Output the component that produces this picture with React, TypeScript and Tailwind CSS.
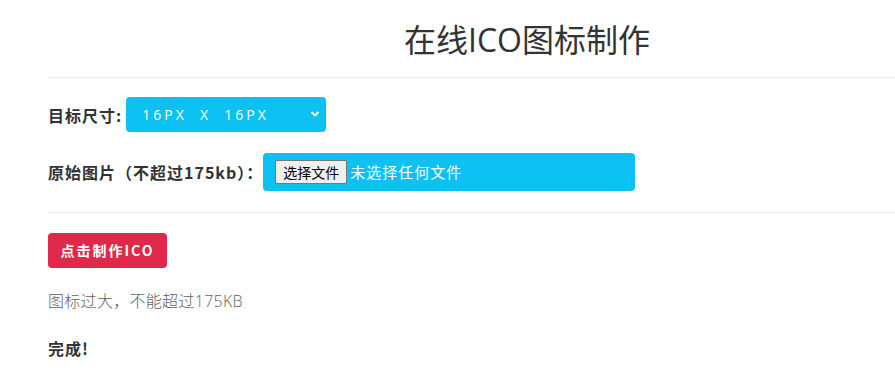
import React from 'react';

const font = { fontFamily: '"Open Sans", "Noto Sans CJK SC", sans-serif' };
const cjk = { fontFamily: '"Noto Sans CJK SC", "Open Sans", sans-serif' };

const App: React.FC = () => {
  return (
    <div className="w-full min-h-[371px] overflow-hidden bg-white text-[#333]" style={font}>
      <div className="ml-[48px] w-[958px]">
        {/* Title */}
        <div className="h-[78px] pt-[21px] border-b border-[#eeeeee]">
          <h1 className="text-center text-[32px] leading-[38px] font-normal text-[#333]">在线ICO图标制作</h1>
        </div>

        {/* Form */}
        <div className="pt-[19px] pb-[21px] border-b border-[#eeeeee]">
          <div className="flex items-center h-[35px]">
            <label className="text-[16px] font-bold tracking-[1px] mr-[4px]" style={cjk}>目标尺寸:</label>
            <div className="relative w-[200px] h-[35px] rounded-[4px] bg-[#0dc1f2] text-white flex items-center">
              <span className="pl-[16px] text-[14px] tracking-[3px]">16PX&nbsp; X&nbsp; 16PX</span>
              <svg className="absolute right-[6px] top-[13px]" width="10" height="8" viewBox="0 0 10 8" fill="none">
                <path d="M1.5 2 L5 5.5 L8.5 2" stroke="white" strokeWidth="1.8" />
              </svg>
            </div>
          </div>
          <div className="flex items-center h-[38px] mt-[21px]">
            <label className="text-[16px] font-bold tracking-[1px]" style={cjk}>原始图片（不超过175kb）：</label>
            <div className="w-[372px] h-[38px] rounded-[4px] bg-[#0dc1f2] flex items-center pl-[12px]">
              <button className="h-[24px] px-[7px] bg-[#efefef] border border-[#767676] rounded-[2px] text-[14px] leading-none text-black" style={cjk}>
                选择文件
              </button>
              <span className="ml-[3px] text-[15px] tracking-[1px] text-white" style={cjk}>未选择任何文件</span>
            </div>
          </div>
        </div>

        {/* Action */}
        <div className="pt-[20px]">
          <button className="w-[119px] h-[35px] rounded-[4px] bg-[#e0284a] text-white text-[14px] font-bold tracking-[2px]" style={cjk}>
            点击制作ICO
          </button>
          <p className="mt-[21px] text-[16px] leading-[24px] tracking-[0.3px] text-[#5f5f5f] font-light">图标过大，不能超过175KB</p>
          <p className="mt-[23px] text-[16px] leading-[24px] tracking-[1px] font-bold text-[#333]" style={cjk}>完成!</p>
        </div>
      </div>
    </div>
  );
};

export default App;
